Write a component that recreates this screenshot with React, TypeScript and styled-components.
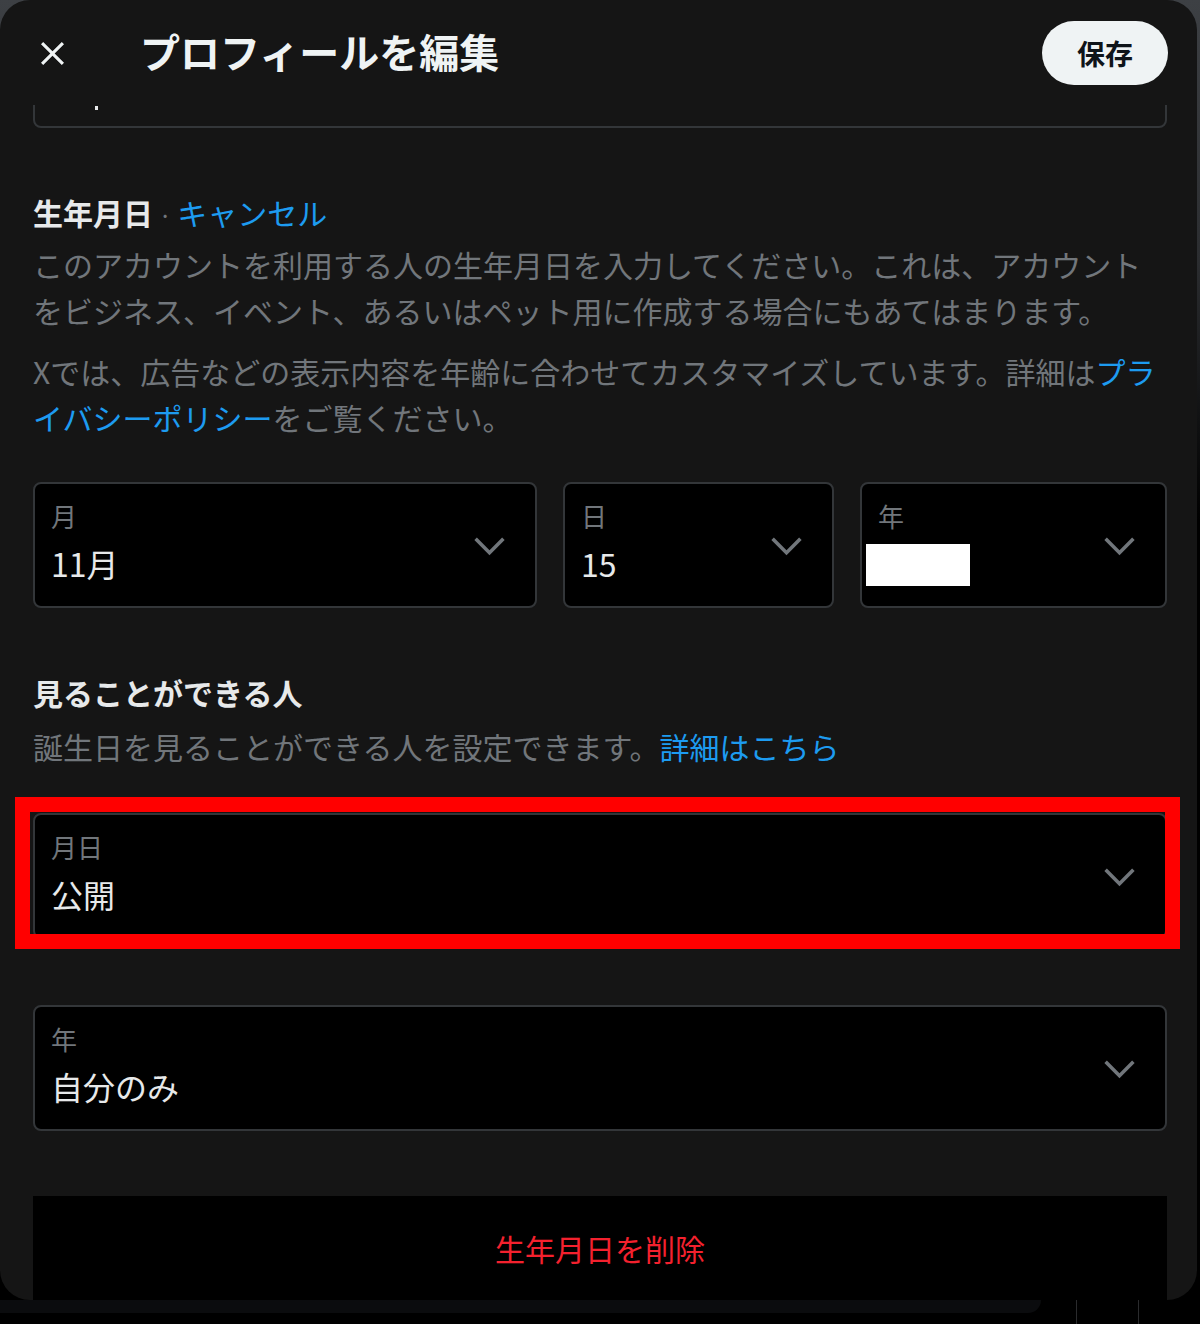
import styled, { createGlobalStyle } from 'styled-components';

const GlobalStyle = createGlobalStyle`
  html, body {
    margin: 0;
    padding: 0;
  }
  body {
    background: #000;
    font-family: 'Noto Sans CJK JP', 'Noto Sans', sans-serif;
    -webkit-font-smoothing: antialiased;
  }
`;

const ChevronIcon = () => (
  <Sty.Chevron viewBox='0 0 24 24' aria-hidden='true'>
    <path d='M3.543 8.96l1.414-1.42L12 14.59l7.043-7.05 1.414 1.42L12 17.41 3.543 8.96z' />
  </Sty.Chevron>
);

const CloseIcon = () => (
  <svg viewBox='0 0 24 24' width='37' height='37' aria-hidden='true'>
    <path
      fill='#eff3f4'
      d='M10.59 12L4.54 5.96l1.42-1.42L12 10.59l6.04-6.05 1.42 1.42L13.41 12l6.05 6.04-1.42 1.42L12 13.41l-6.04 6.05-1.42-1.42L10.59 12z'
    />
  </svg>
);

interface SelectProps {
  label: string;
  value?: string;
  hidden?: boolean;
}

const Select = ({ label, value, hidden }: SelectProps) => (
  <Sty.Select>
    <Sty.SelectText>
      <Sty.Label>{label}</Sty.Label>
      {hidden ? <Sty.Redacted /> : <Sty.Value>{value}</Sty.Value>}
    </Sty.SelectText>
    <ChevronIcon />
  </Sty.Select>
);

const App = () => {
  return (
    <>
      <GlobalStyle />
      <Sty.Page>
        <Sty.Modal>
          <Sty.Header>
            <Sty.CloseButton type='button' aria-label='閉じる'>
              <CloseIcon />
            </Sty.CloseButton>
            <Sty.Title>プロフィールを編集</Sty.Title>
            <Sty.SaveButton type='button'>保存</Sty.SaveButton>
          </Sty.Header>

          <Sty.Body>
            <Sty.PrevField>
              <Sty.Caret />
            </Sty.PrevField>

            <Sty.Section $gap={61}>
              <Sty.Heading>
                生年月日<Sty.Dot> · </Sty.Dot>
                <Sty.HeadingLink>キャンセル</Sty.HeadingLink>
              </Sty.Heading>
              <Sty.Text $top={3}>
                このアカウントを利用する人の生年月日を入力してください。これは、アカウントをビジネス、イベント、あるいはペット用に作成する場合にもあてはまります。
              </Sty.Text>
              <Sty.Text $top={15}>
                Xでは、広告などの表示内容を年齢に合わせてカスタマイズしています。詳細は
                <Sty.Link>プライバシーポリシー</Sty.Link>をご覧ください。
              </Sty.Text>
              <Sty.DateRow>
                <Select label='月' value='11月' />
                <Select label='日' value='15' />
                <Select label='年' hidden />
              </Sty.DateRow>
            </Sty.Section>

            <Sty.Section $gap={61}>
              <Sty.Heading>見ることができる人</Sty.Heading>
              <Sty.Text $top={8}>
                誕生日を見ることができる人を設定できます。<Sty.Link>詳細はこちら</Sty.Link>
              </Sty.Text>
              <Sty.Highlight>
                <Select label='月日' value='公開' />
              </Sty.Highlight>
              <Sty.Spaced $top={66}>
                <Select label='年' value='自分のみ' />
              </Sty.Spaced>
            </Sty.Section>

            <Sty.DeleteButton type='button'>生年月日を削除</Sty.DeleteButton>
          </Sty.Body>
        </Sty.Modal>
        <Sty.BottomEdge>
          <Sty.Shelf />
          <Sty.Rule />
          <Sty.Rule />
        </Sty.BottomEdge>
      </Sty.Page>
    </>
  );
};

const Sty = {
  Page: styled.div`
    width: 1200px;
    height: 1324px;
    overflow: hidden;
    background: linear-gradient(180deg, #3d4044 0, #2b2d30 260px, #000 520px);
  `,
  Modal: styled.div`
    width: 1197px;
    height: 1300px;
    border-radius: 30px;
    background: #151515;
    overflow: hidden;
    display: flex;
    flex-direction: column;
  `,
  Header: styled.header`
    flex: none;
    height: 105px;
    display: flex;
    align-items: center;
    padding: 0 29px 0 24px;
    box-sizing: border-box;
  `,
  CloseButton: styled.button`
    width: 56px;
    height: 56px;
    margin-top: 1px;
    padding: 0;
    border: none;
    border-radius: 50%;
    background: transparent;
    display: flex;
    align-items: center;
    justify-content: center;
  `,
  Title: styled.h2`
    flex: 1;
    margin: 0 0 4px 60px;
    font-size: 40px;
    line-height: 48px;
    font-weight: 700;
    color: #eff3f4;
  `,
  SaveButton: styled.button`
    height: 64px;
    padding: 0 35px;
    margin-top: 1px;
    border: none;
    border-radius: 32px;
    background: #eff3f4;
    color: #0f1419;
    font-family: inherit;
    font-size: 28px;
    font-weight: 700;
  `,
  Body: styled.div`
    flex: 1;
    min-height: 0;
    overflow: hidden;
    padding: 0 30px 0 33px;
    display: flex;
    flex-direction: column;
  `,
  PrevField: styled.div`
    flex: none;
    height: 126px;
    margin-top: -103px;
    border: 2px solid #333639;
    border-radius: 8px;
    box-sizing: border-box;
  `,
  Caret: styled.span`
    display: block;
    width: 3px;
    height: 4px;
    margin: 102px 0 0 60px;
    background: #e7e9ea;
  `,
  Section: styled.section<{ $gap: number }>`
    margin-top: ${({ $gap }) => $gap}px;
    display: flex;
    flex-direction: column;
  `,
  Heading: styled.h3`
    margin: 0;
    font-size: 30px;
    line-height: 46px;
    font-weight: 700;
    color: #e7e9ea;
  `,
  Dot: styled.span`
    font-weight: 400;
    font-size: 24px;
    color: #71767b;
  `,
  HeadingLink: styled.span`
    font-weight: 400;
    color: #1d9bf0;
  `,
  Text: styled.p<{ $top: number }>`
    margin: ${({ $top }) => $top}px 0 0;
    font-size: 30px;
    line-height: 46px;
    color: #71767b;
    line-break: strict;
  `,
  Link: styled.span`
    color: #1d9bf0;
  `,
  DateRow: styled.div`
    margin-top: 42px;
    display: grid;
    grid-template-columns: 504px 271px 1fr;
    gap: 26px;
  `,
  Select: styled.div`
    height: 126px;
    border: 2px solid #333639;
    border-radius: 8px;
    background: #000;
    box-sizing: border-box;
    display: flex;
    align-items: center;
    padding: 0 24px 0 16px;
  `,
  SelectText: styled.div`
    flex: 1;
    align-self: stretch;
    display: flex;
    flex-direction: column;
    padding-top: 17px;
  `,
  Label: styled.span`
    font-size: 26px;
    line-height: 30px;
    color: #71767b;
  `,
  Value: styled.span`
    margin-top: 12px;
    font-size: 32px;
    line-height: 40px;
    color: #e7e9ea;
  `,
  Redacted: styled.span`
    display: block;
    width: 104px;
    height: 42px;
    margin: 13px 0 0 -12px;
    background: #fff;
  `,
  Chevron: styled.svg`
    flex: none;
    width: 43px;
    height: 43px;
    fill: #71767b;
  `,
  Highlight: styled.div`
    position: relative;
    margin-top: 44px;

    // red frame drawn over the select
    &::after {
      content: '';
      position: absolute;
      left: -18px;
      right: -13px;
      top: -16px;
      bottom: -10px;
      border: 15px solid #ff0000;
      pointer-events: none;
    }
  `,
  Spaced: styled.div<{ $top: number }>`
    margin-top: ${({ $top }) => $top}px;
  `,
  DeleteButton: styled.button`
    flex: none;
    margin-top: 65px;
    height: 104px;
    border: none;
    background: #000;
    color: #f4212e;
    font-family: inherit;
    font-size: 30px;
    line-height: 40px;
  `,
  BottomEdge: styled.div`
    display: flex;
    align-items: flex-start;
  `,
  Shelf: styled.div`
    width: 1048px;
    height: 13px;
    background: #0b0c0e;
    border-bottom-right-radius: 14px;
    margin-right: 35px;
  `,
  Rule: styled.div`
    width: 1px;
    height: 24px;
    background: #2a2b2d;
    margin-right: 61px;
  `,
};

export default App;
